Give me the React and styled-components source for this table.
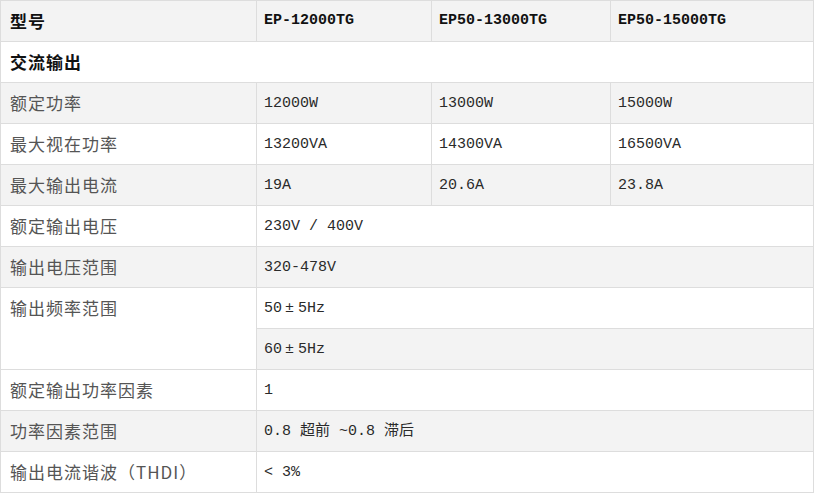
import React from 'react'
import styled, { createGlobalStyle } from 'styled-components'

const GlobalStyle = createGlobalStyle`
  html, body {
    margin: 0;
    padding: 0;
    background: #ffffff;
  }
`

const Table = styled.table`
  width: 813px;
  border-collapse: collapse;
  table-layout: fixed;
  font-family: "Liberation Mono", "Noto Sans CJK SC", monospace;
`

const Row = styled.tr`
  height: 41px;
  background: ${props => (props.shade ? '#f3f3f3' : '#ffffff')};
`

const Label = styled.td`
  padding: 0 9px;
  border: 1px solid #dddddd;
  vertical-align: ${props => (props.top ? 'top' : 'middle')};
  line-height: 40px;
  font-family: "Noto Sans CJK SC", "Liberation Mono", sans-serif;
  font-size: 17px;
  letter-spacing: 1px;
  color: #555555;
  background: ${props => (props.plain ? '#ffffff' : 'transparent')};
`

const Value = styled.td`
  padding: 2px 7px 0;
  border: 1px solid #dddddd;
  font-size: 15px;
  line-height: 20px;
  color: #2a2a2a;
  white-space: pre;
`

const Sign = styled.span`
  margin: 0 4px 0 3px;
`

const Head = styled.th`
  padding: 0 ${props => (props.cjk ? '9px' : '7px')};
  border: 1px solid #dddddd;
  text-align: left;
  font-weight: 700;
  line-height: 20px;
  font-size: ${props => (props.cjk ? '17px' : '15px')};
  letter-spacing: ${props => (props.cjk ? '1px' : '0')};
  font-family: ${props =>
    props.cjk
      ? '"Noto Sans CJK SC", sans-serif'
      : '"Liberation Mono", "Noto Sans CJK SC", monospace'};
  color: #111111;
`

const rows = [
  { label: '额定功率', values: ['12000W', '13000W', '15000W'], shade: true },
  { label: '最大视在功率', values: ['13200VA', '14300VA', '16500VA'] },
  { label: '最大输出电流', values: ['19A', '20.6A', '23.8A'], shade: true },
  { label: '额定输出电压', values: ['230V / 400V'] },
  { label: '输出电压范围', values: ['320-478V'], shade: true },
]

const tail = [
  { label: '额定输出功率因素', values: ['1'] },
  { label: '功率因素范围', values: ['0.8 超前 ~0.8 滞后'], shade: true },
  { label: '输出电流谐波（THDI）', values: ['< 3%'] },
]

const SpecRow = ({ item }) => (
  <Row shade={item.shade ? 1 : 0}>
    <Label>{item.label}</Label>
    {item.values.length === 1 ? (
      <Value colSpan={3}>{item.values[0]}</Value>
    ) : (
      item.values.map(v => <Value key={v}>{v}</Value>)
    )}
  </Row>
)

const App = () => {
  return (
    <>
      <GlobalStyle />
      <Table>
        <colgroup>
          <col style={{ width: 256 }} />
          <col style={{ width: 175 }} />
          <col style={{ width: 179 }} />
          <col style={{ width: 203 }} />
        </colgroup>
        <tbody>
          <Row shade={1}>
            <Head cjk={1}>型号</Head>
            <Head>EP-12000TG</Head>
            <Head>EP50-13000TG</Head>
            <Head>EP50-15000TG</Head>
          </Row>
          <Row>
            <Head cjk={1} colSpan={4}>交流输出</Head>
          </Row>
          {rows.map(item => <SpecRow key={item.label} item={item} />)}
          <Row>
            <Label rowSpan={2} top={1} plain={1}>输出频率范围</Label>
            <Value colSpan={3}>50<Sign>±</Sign>5Hz</Value>
          </Row>
          <Row shade={1}>
            <Value colSpan={3}>60<Sign>±</Sign>5Hz</Value>
          </Row>
          {tail.map(item => <SpecRow key={item.label} item={item} />)}
        </tbody>
      </Table>
    </>
  )
}

export default App
